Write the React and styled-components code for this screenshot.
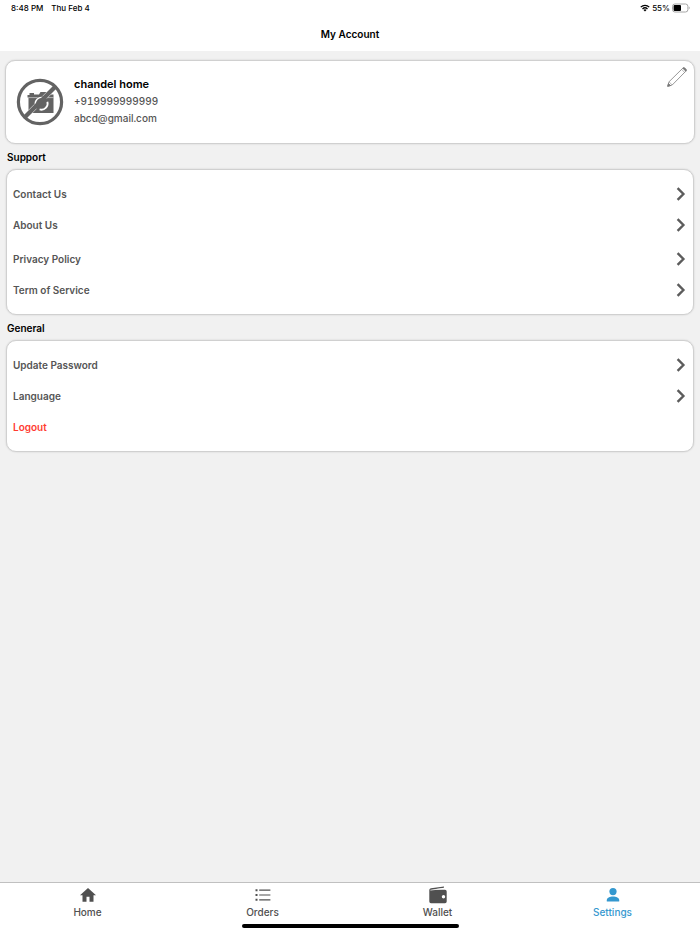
import React from 'react';
import styled, { createGlobalStyle } from 'styled-components';

const GlobalStyle = createGlobalStyle`
  * {
    box-sizing: border-box;
  }
  body {
    margin: 0;
    background: #f1f1f1;
    color: #000;
    font-family: Inter, 'Liberation Sans', sans-serif;
  }
  h1, h2, p, ul {
    margin: 0;
    padding: 0;
  }
  button {
    font-family: inherit;
    border: 0;
    background: none;
    padding: 0;
    cursor: pointer;
  }
`;

const supportItems = [
  { label: 'Contact Us' },
  { label: 'About Us' },
  { label: 'Privacy Policy', spaced: true },
  { label: 'Term of Service' },
];

const generalItems = [
  { label: 'Update Password' },
  { label: 'Language' },
  { label: 'Logout', danger: true },
];

const tabs = [
  { label: 'Home', icon: HomeIcon },
  { label: 'Orders', icon: OrdersIcon },
  { label: 'Wallet', icon: WalletIcon },
  { label: 'Settings', icon: SettingsIcon, active: true },
];

export default function App() {
  return (
    <>
      <GlobalStyle />
      <Screen>
        <Header>
          <StatusBar>
            <StatusGroup $gap={8}>
              <span>8:48 PM</span>
              <span>Thu Feb 4</span>
            </StatusGroup>
            <StatusGroup $gap={2}>
              <WifiIcon />
              <span>55%</span>
              <BatteryIcon />
            </StatusGroup>
          </StatusBar>
          <Title>My Account</Title>
        </Header>
        <Main>
          <ProfileCard>
            <NoPhotoIcon />
            <ProfileInfo>
              <Name>chandel home</Name>
              <Detail>+919999999999</Detail>
              <Detail>abcd@gmail.com</Detail>
            </ProfileInfo>
            <EditButton type="button" aria-label="Edit profile">
              <PencilIcon />
            </EditButton>
          </ProfileCard>
          <Section title="Support" items={supportItems} />
          <Section title="General" items={generalItems} />
        </Main>
        <Footer>
          <TabBar>
            {tabs.map(({ label, icon: Icon, active }) => (
              <Tab key={label} type="button" $active={active}>
                <Icon />
                {label}
              </Tab>
            ))}
          </TabBar>
          <HomeIndicator />
        </Footer>
      </Screen>
    </>
  );
}

function Section({ title, items }) {
  return (
    <section>
      <SectionTitle>{title}</SectionTitle>
      <MenuCard>
        {items.map(({ label, spaced, danger }) => (
          <MenuItem key={label} $spaced={spaced}>
            <MenuButton type="button" $danger={danger}>
              {label}
              {!danger && <ChevronIcon />}
            </MenuButton>
          </MenuItem>
        ))}
      </MenuCard>
    </section>
  );
}

function WifiIcon() {
  return (
    <svg width="10" height="8" viewBox="0 0 20 16" fill="none" stroke="#000" strokeWidth="2.6">
      <path d="M1.5 6.2a12.2 12.2 0 0 1 17 0" />
      <path d="M5 10a7.2 7.2 0 0 1 10 0" />
      <path d="M10 15.2l-3-3.2a4.4 4.4 0 0 1 6 0z" fill="#000" stroke="none" />
    </svg>
  );
}

function BatteryIcon() {
  return (
    <svg width="18" height="10" viewBox="0 0 18 10">
      <rect x="0.5" y="1" width="15.4" height="8" rx="2.4" fill="none" stroke="#a6a6a6" />
      <rect x="1.6" y="2.1" width="7.4" height="5.8" rx="1" fill="#000" />
      <path d="M16.8 3.6v2.8c1.2-.5 1.2-2.3 0-2.8z" fill="#a6a6a6" />
    </svg>
  );
}

function NoPhotoIcon() {
  return (
    <svg width="48" height="48" viewBox="0 0 48 48">
      <path
        fill="#636363"
        d="M13.5 15h4.5v1.5h5l1.5-2.5h8.5l1.5 2.5H37.5V35H12.5V19.5h-1V17h2z"
      />
      <path d="M12.5 19.6h13M32 19.6h5.5" stroke="#fff" strokeWidth="0.5" />
      <path d="M8 40 40 8" stroke="#fff" strokeWidth="5" />
      <circle cx="25.5" cy="25.5" r="7.2" fill="#636363" />
      <path d="M19.5 27.2a6.2 6.2 0 0 1 7.6-7.6" fill="none" stroke="#fff" strokeWidth="1.4" />
      <path d="M31.4 23.8a6.2 6.2 0 0 1-7.8 7.6" fill="none" stroke="#fff" strokeWidth="1.8" />
      <path d="M8 40 40 8" stroke="#636363" strokeWidth="4.2" />
      <circle cx="24" cy="24" r="21.6" fill="none" stroke="#636363" strokeWidth="3.2" />
    </svg>
  );
}

function PencilIcon() {
  return (
    <svg width="20" height="20" viewBox="0 0 20 20" fill="none" stroke="#8c8c8c" strokeWidth="0.9">
      <path d="M.7 19.3 2 14.8 15.8 1.2q1-.9 2 0l1 1q.9 1 0 2L5.2 18z" />
      <path d="M2 14.8 5.2 18M14.6 2.4l3 3" strokeWidth="0.6" />
      <path d="m15.8 1.2 3 3q.9-1 0-2l-1-1q-1-.9-2 0zM.7 19.3l.8-2.7 2 2z" fill="#777" stroke="#777" />
    </svg>
  );
}

function ChevronIcon() {
  return (
    <svg width="10" height="14" viewBox="0 0 10 14" fill="none" stroke="#5c5c5c" strokeWidth="2.4">
      <path d="M1.6 1.2 7.4 7l-5.8 5.8" />
    </svg>
  );
}

function HomeIcon() {
  return (
    <svg width="18" height="18" viewBox="0 0 18 18" fill="currentColor">
      <path d="M7.5 15.8v-5h3v5h4V9.2H17L9 2 1 9.2h2.5v6.6z" />
    </svg>
  );
}

function OrdersIcon() {
  return (
    <svg width="18" height="18" viewBox="0 0 18 18" fill="currentColor">
      <path d="M1.5 3.2h2v2h-2zM1.5 8h2v2h-2zM1.5 12.8h2v2h-2zM5.2 3.6h11.2v1.2H5.2zM5.2 8.4h11.2v1.2H5.2zM5.2 13.2h11.2v1.2H5.2z" />
    </svg>
  );
}

function WalletIcon() {
  return (
    <svg width="18" height="18" viewBox="0 0 18 18" fill="currentColor">
      <path d="M.3 3.7Q.7 2.5 2 2.3L15 .4v1.4L2.6 3.7H16q1.7 0 1.7 1.7v10.1q0 1.7-1.7 1.7H2Q.3 17.2.3 15.5z" />
      <path d="M1.4 4.2 15.6 2.2" stroke="#fff" strokeWidth="0.7" />
      <circle cx="14.5" cy="10.8" r="1.7" fill="#fff" />
    </svg>
  );
}

function SettingsIcon() {
  return (
    <svg width="18" height="18" viewBox="0 0 18 18" fill="currentColor">
      <circle cx="9" cy="5.6" r="3.6" />
      <path d="M2.8 15.4v-1.2c0-2.2 3-3.6 6.2-3.6s6.2 1.4 6.2 3.6v1.2z" />
    </svg>
  );
}

const Screen = styled.div`
  display: flex;
  flex-direction: column;
  min-height: 100vh;
`;

const Header = styled.header`
  background: #fff;
  padding-bottom: 9px;
`;

const StatusBar = styled.div`
  display: flex;
  align-items: center;
  justify-content: space-between;
  height: 16px;
  padding: 0 10px 0 11px;
  font-size: 8px;
  font-weight: 500;
`;

const StatusGroup = styled.div`
  display: flex;
  align-items: center;
  gap: ${({ $gap }) => $gap}px;
`;

const Title = styled.h1`
  padding-top: 10px;
  font-size: 10px;
  font-weight: 600;
  line-height: 16px;
  text-align: center;
`;

const Main = styled.main`
  flex: 1;
  padding: 9px 6px 0;
`;

const Card = styled.div`
  background: #fff;
  border: 1px solid #d0d0d0;
  border-radius: 10px;
  box-shadow: 0 0 2px rgba(0, 0, 0, 0.15);
`;

const ProfileCard = styled(Card)`
  display: flex;
  align-items: center;
  margin: 0 -1px;
  padding: 15px 7px 16px 10px;
  gap: 10px;
`;

const ProfileInfo = styled.div`
  flex: 1;
`;

const Name = styled.h2`
  font-size: 11px;
  font-weight: 600;
  line-height: 17px;
`;

const Detail = styled.p`
  color: #555;
  font-size: 10px;
  font-weight: 500;
  font-variant-numeric: tabular-nums;
  line-height: 17px;
`;

const EditButton = styled.button`
  display: flex;
  align-self: flex-start;
  margin-top: -9px;
`;

const SectionTitle = styled.h2`
  padding: 5px 1px 4px;
  font-size: 10px;
  font-weight: 600;
  line-height: 16px;
`;

const MenuCard = styled(Card).attrs({ as: 'ul' })`
  list-style: none;
  padding: 8px 7px 9px 6px;
`;

const MenuItem = styled.li`
  margin-top: ${({ $spaced }) => ($spaced ? '3px' : '0')};
`;

const MenuButton = styled.button`
  display: flex;
  align-items: center;
  justify-content: space-between;
  width: 100%;
  height: 31px;
  color: ${({ $danger }) => ($danger ? '#ff3b30' : '#555')};
  font-size: 10px;
  font-weight: 600;
`;

const Footer = styled.footer`
  display: flex;
  flex-direction: column;
  align-items: center;
  background: #fff;
  border-top: 1px solid #c0c0c0;
  padding-bottom: 6px;
`;

const TabBar = styled.nav`
  display: flex;
  width: 100%;
  padding-top: 3px;
`;

const Tab = styled.button`
  display: flex;
  flex: 1;
  flex-direction: column;
  align-items: center;
  height: 38px;
  color: ${({ $active }) => ($active ? '#3498cf' : '#505050')};
  font-size: 10px;
  font-weight: 500;
  line-height: 16px;
`;

const HomeIndicator = styled.div`
  width: 31%;
  height: 4px;
  border-radius: 2px;
  background: #000;
`;
